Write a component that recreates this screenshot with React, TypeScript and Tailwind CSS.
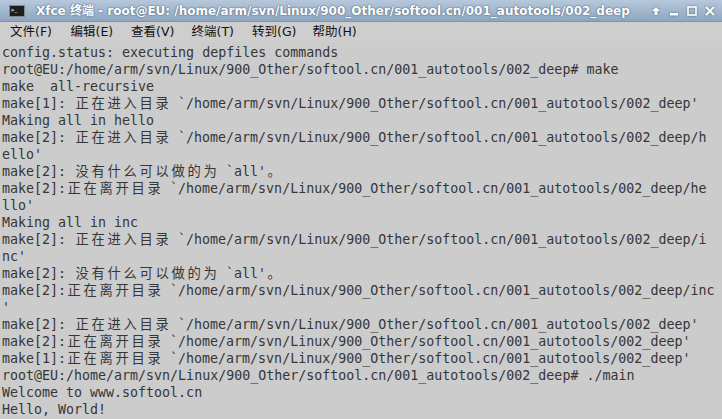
import React from 'react';

const lines: string[] = [
    "config.status: executing depfiles commands",
    "root@EU:/home/arm/svn/Linux/900_Other/softool.cn/001_autotools/002_deep# make",
    "make  all-recursive",
    "make[1]: 正在进入目录 `/home/arm/svn/Linux/900_Other/softool.cn/001_autotools/002_deep'",
    "Making all in hello",
    "make[2]: 正在进入目录 `/home/arm/svn/Linux/900_Other/softool.cn/001_autotools/002_deep/h",
    "ello'",
    "make[2]: 没有什么可以做的为 `all'。",
    "make[2]:正在离开目录 `/home/arm/svn/Linux/900_Other/softool.cn/001_autotools/002_deep/he",
    "llo'",
    "Making all in inc",
    "make[2]: 正在进入目录 `/home/arm/svn/Linux/900_Other/softool.cn/001_autotools/002_deep/i",
    "nc'",
    "make[2]: 没有什么可以做的为 `all'。",
    "make[2]:正在离开目录 `/home/arm/svn/Linux/900_Other/softool.cn/001_autotools/002_deep/inc",
    "'",
    "make[2]: 正在进入目录 `/home/arm/svn/Linux/900_Other/softool.cn/001_autotools/002_deep'",
    "make[2]:正在离开目录 `/home/arm/svn/Linux/900_Other/softool.cn/001_autotools/002_deep'",
    "make[1]:正在离开目录 `/home/arm/svn/Linux/900_Other/softool.cn/001_autotools/002_deep'",
    "root@EU:/home/arm/svn/Linux/900_Other/softool.cn/001_autotools/002_deep# ./main",
    "Welcome to www.softool.cn",
    "Hello, World!",
];

const menus = ["文件(F)", "编辑(E)", "查看(V)", "终端(T)", "转到(G)", "帮助(H)"];

// wide chars take two terminal cells (16px)
const TermLine: React.FC<{ text: string }> = ({ text }) => {
    const parts: React.ReactNode[] = [];
    let buf = '';
    Array.from(text).forEach((ch, i) => {
        if (ch.charCodeAt(0) >= 0x2e80) {
            if (buf) { parts.push(buf); buf = ''; }
            parts.push(<span key={i} className="inline-block w-[16px] text-center">{ch}</span>);
        } else {
            buf += ch;
        }
    });
    if (buf) parts.push(buf);
    return <div className="h-[17px] whitespace-pre">{parts.length ? parts : ' '}</div>;
};

const App: React.FC = () => {
    return (
        <div className="w-[722px] h-[419px] flex flex-col overflow-hidden bg-[#cccccc]">
            {/* Title bar */}
            <div className="h-[22px] flex items-center bg-gradient-to-b from-[#b7c8dc] to-[#8ea6c1] border-b border-[#7d93ad]">
                <div className="ml-[9px] w-[16px] h-[12px] bg-[#1e1e1e] border border-[#888] flex items-start p-[1px]">
                    <span className="text-[6px] leading-[6px] text-white font-bold">&gt;_</span>
                </div>
                <div className="ml-[11px] text-[12px] font-bold text-white [font-family:'DejaVu_Sans','Noto_Sans_CJK_SC',sans-serif] [text-shadow:0_0_2px_#51657d,0_0_1px_#51657d] whitespace-pre">
                    Xfce 终端 - root@EU: /home/arm/svn/Linux/900_Other/softool.cn/001_autotools/002_deep
                </div>
                <div className="ml-auto mr-[6px] flex items-center gap-[6px] text-white">
                    <svg width="12" height="12" viewBox="0 0 12 12" className="drop-shadow-[0_0_1px_#51657d]">
                        <path d="M6 2 L10 6 H7.5 V10 H4.5 V6 H2 Z" fill="white" />
                    </svg>
                    <svg width="12" height="12" viewBox="0 0 12 12" className="drop-shadow-[0_0_1px_#51657d]">
                        <rect x="2" y="8" width="8" height="2.5" fill="white" />
                    </svg>
                    <svg width="12" height="12" viewBox="0 0 12 12" className="drop-shadow-[0_0_1px_#51657d]">
                        <rect x="2" y="2" width="8" height="8" fill="none" stroke="white" strokeWidth="1.6" />
                    </svg>
                    <svg width="12" height="12" viewBox="0 0 12 12" className="drop-shadow-[0_0_1px_#51657d]">
                        <path d="M2 2 L10 10 M10 2 L2 10" stroke="white" strokeWidth="2" />
                    </svg>
                </div>
            </div>

            {/* Menu bar */}
            <div className="h-[20px] flex items-center bg-[#cecece] text-[12.5px] text-[#111] [font-family:'DejaVu_Sans','Noto_Sans_CJK_SC',sans-serif]">
                {menus.map((m, i) => (
                    <div key={i} className="w-[60.5px] pl-[10px] whitespace-pre">{m}</div>
                ))}
            </div>

            {/* Terminal */}
            <div className="pl-[2px] pt-[2px] text-[13.3px] leading-[17px] text-[#363636] [font-family:'DejaVu_Sans_Mono','Noto_Sans_CJK_SC',monospace]">
                {lines.map((l, i) => <TermLine key={i} text={l} />)}
            </div>
        </div>
    );
};

export default App;
